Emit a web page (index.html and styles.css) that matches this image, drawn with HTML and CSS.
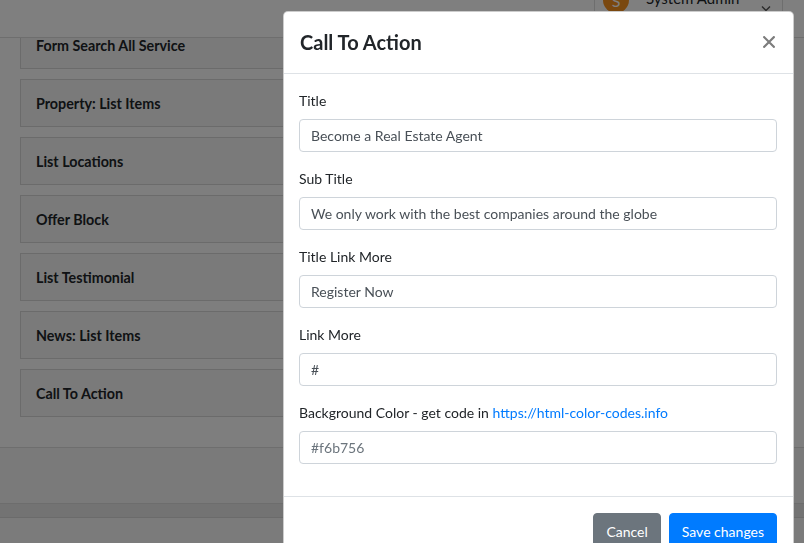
FILE: index.html
```html
<!DOCTYPE html>
<html lang="en">
<head>
<meta charset="utf-8">
<title>Call To Action</title>
<link rel="stylesheet" href="styles.css">
</head>
<body>
<header class="topbar">
  <div class="user">
    <span class="avatar">S</span>
    <span class="uname">System Admin</span>
    <svg class="caret" width="10" height="7" viewBox="0 0 10 7"><path d="M1 1.5 L5 5.5 L9 1.5" fill="none" stroke="#555" stroke-width="1.4"/></svg>
  </div>
</header>

<main class="page">
  <section class="panel">
    <div class="block">Form Search All Service</div>
    <div class="block">Property: List Items</div>
    <div class="block">List Locations</div>
    <div class="block">Offer Block</div>
    <div class="block">List Testimonial</div>
    <div class="block">News: List Items</div>
    <div class="block">Call To Action</div>
  </section>
  <div class="panel-foot"></div>
  <div class="band"></div>
  <div class="rest"></div>
</main>

<div class="backdrop"></div>

<div class="modal">
  <div class="modal-header">
    <h5 class="modal-title">Call To Action</h5>
    <button class="close" type="button" aria-label="Close">
      <svg width="12" height="12" viewBox="0 0 12 12"><path d="M1.2 1.2 L10.8 10.8 M10.8 1.2 L1.2 10.8" stroke="#7d7d7d" stroke-width="2.2" stroke-linecap="square"/></svg>
    </button>
  </div>
  <div class="modal-body">
    <div class="form-group">
      <label>Title</label>
      <input class="form-control" type="text" value="Become a Real Estate Agent">
    </div>
    <div class="form-group">
      <label>Sub Title</label>
      <input class="form-control" type="text" value="We only work with the best companies around the globe">
    </div>
    <div class="form-group">
      <label>Title Link More</label>
      <input class="form-control" type="text" value="Register Now">
    </div>
    <div class="form-group">
      <label>Link More</label>
      <input class="form-control" type="text" value="#">
    </div>
    <div class="form-group">
      <label>Background Color - get code in <a href="#">https://html-color-codes.info</a></label>
      <input class="form-control" type="text" placeholder="#f6b756">
    </div>
  </div>
  <div class="modal-footer">
    <button class="btn btn-secondary" type="button">Cancel</button>
    <button class="btn btn-primary" type="button">Save changes</button>
  </div>
</div>
</body>
</html>
```

FILE: styles.css
```css
* { box-sizing: border-box; }

html, body {
  margin: 0;
  padding: 0;
  height: 100%;
  overflow: hidden;
}

body {
  font-family: Lato, "Open Sans", "Liberation Sans", sans-serif;
  font-size: 14px;
  color: #212529;
  background: #fdfdfd;
}

/* ---------- underlying page ---------- */
.topbar {
  position: fixed;
  top: 0;
  left: 0;
  right: 0;
  height: 38px;
  background: #ffffff;
  border-bottom: 1px solid #dcdcdc;
  display: flex;
  justify-content: flex-end;
  padding-right: 21px;
  z-index: 2;
}

.user {
  width: 189px;
  height: 100%;
  border-left: 1px solid #dcdcdc;
  border-right: 1px solid #dcdcdc;
  display: flex;
  align-items: flex-start;
  padding-left: 8px;
  overflow: hidden;
}

.avatar {
  width: 26px;
  height: 26px;
  margin-top: -13px;
  border-radius: 50%;
  background: #f4901e;
  color: #fff;
  font-size: 16px;
  display: flex;
  align-items: center;
  justify-content: center;
  flex: none;
}

.uname {
  margin-left: 17px;
  margin-top: -12px;
  font-size: 15px;
  line-height: 20px;
  color: #212529;
}

.caret {
  margin-left: auto;
  margin-right: 11px;
  margin-top: 5px;
}

.page {
  padding-top: 21px;
}

.panel {
  padding: 0 20px 20px 20px;
  border-bottom: 1px solid #dcdcdc;
}

.block {
  height: 48px;
  margin-bottom: 10px;
  padding: 0 15px;
  border: 1px solid #d6d6d6;
  background: #f4f4f4;
  display: flex;
  align-items: center;
  font-size: 14.3px;
  font-weight: 700;
  color: #212529;
}

.panel-foot {
  height: 56px;
  background: #f5f5f5;
  border-bottom: 1px solid #dadada;
}

.band {
  height: 14px;
  background: #e6e6e6;
  border-bottom: 1px solid #d6d6d6;
}

.rest {
  height: 40px;
  background: #f6f6f6;
}

/* ---------- modal ---------- */
.backdrop {
  position: fixed;
  inset: 0;
  background: rgba(0, 0, 0, 0.5);
  z-index: 5;
}

.modal {
  position: fixed;
  top: 11px;
  left: 283px;
  width: 511px;
  background: #fff;
  border: 1px solid rgba(0, 0, 0, 0.2);
  border-radius: 5px;
  z-index: 10;
}

.modal-header {
  display: flex;
  align-items: flex-start;
  padding: 15px 16px 16px 16px;
  border-bottom: 1px solid #dee2e6;
}

.modal-title {
  margin: 0;
  font-size: 20px;
  line-height: 30px;
  font-weight: 700;
  color: #212529;
}

.close {
  margin-left: auto;
  margin-top: 9px;
  margin-right: 2px;
  padding: 0;
  border: 0;
  background: transparent;
  display: flex;
}

.modal-body {
  padding: 16px 16px 16px 15px;
}

.form-group {
  margin-bottom: 16px;
}

.form-group label {
  display: block;
  margin-bottom: 8px;
  font-size: 14px;
  line-height: 21px;
  color: #212529;
}

.form-group a {
  color: #007bff;
  text-decoration: none;
}

.form-control {
  display: block;
  width: 100%;
  height: 33px;
  padding: 0 11px;
  border: 1px solid #ced4da;
  border-radius: 4px;
  font-family: inherit;
  font-size: 14px;
  color: #495057;
  background: #fff;
}

.form-control::placeholder {
  color: #6c757d;
  opacity: 1;
}

.modal-footer {
  display: flex;
  justify-content: flex-end;
  gap: 8px;
  padding: 16px 16px 16px 16px;
  border-top: 1px solid #dee2e6;
}

.btn {
  height: 38px;
  padding: 0 12px;
  border: 1px solid transparent;
  border-radius: 4px;
  font-family: inherit;
  font-size: 14px;
  line-height: 24px;
  color: #fff;
}

.btn-secondary {
  background: #6c757d;
  border-color: #6c757d;
}

.btn-primary {
  background: #007bff;
  border-color: #007bff;
}
```
